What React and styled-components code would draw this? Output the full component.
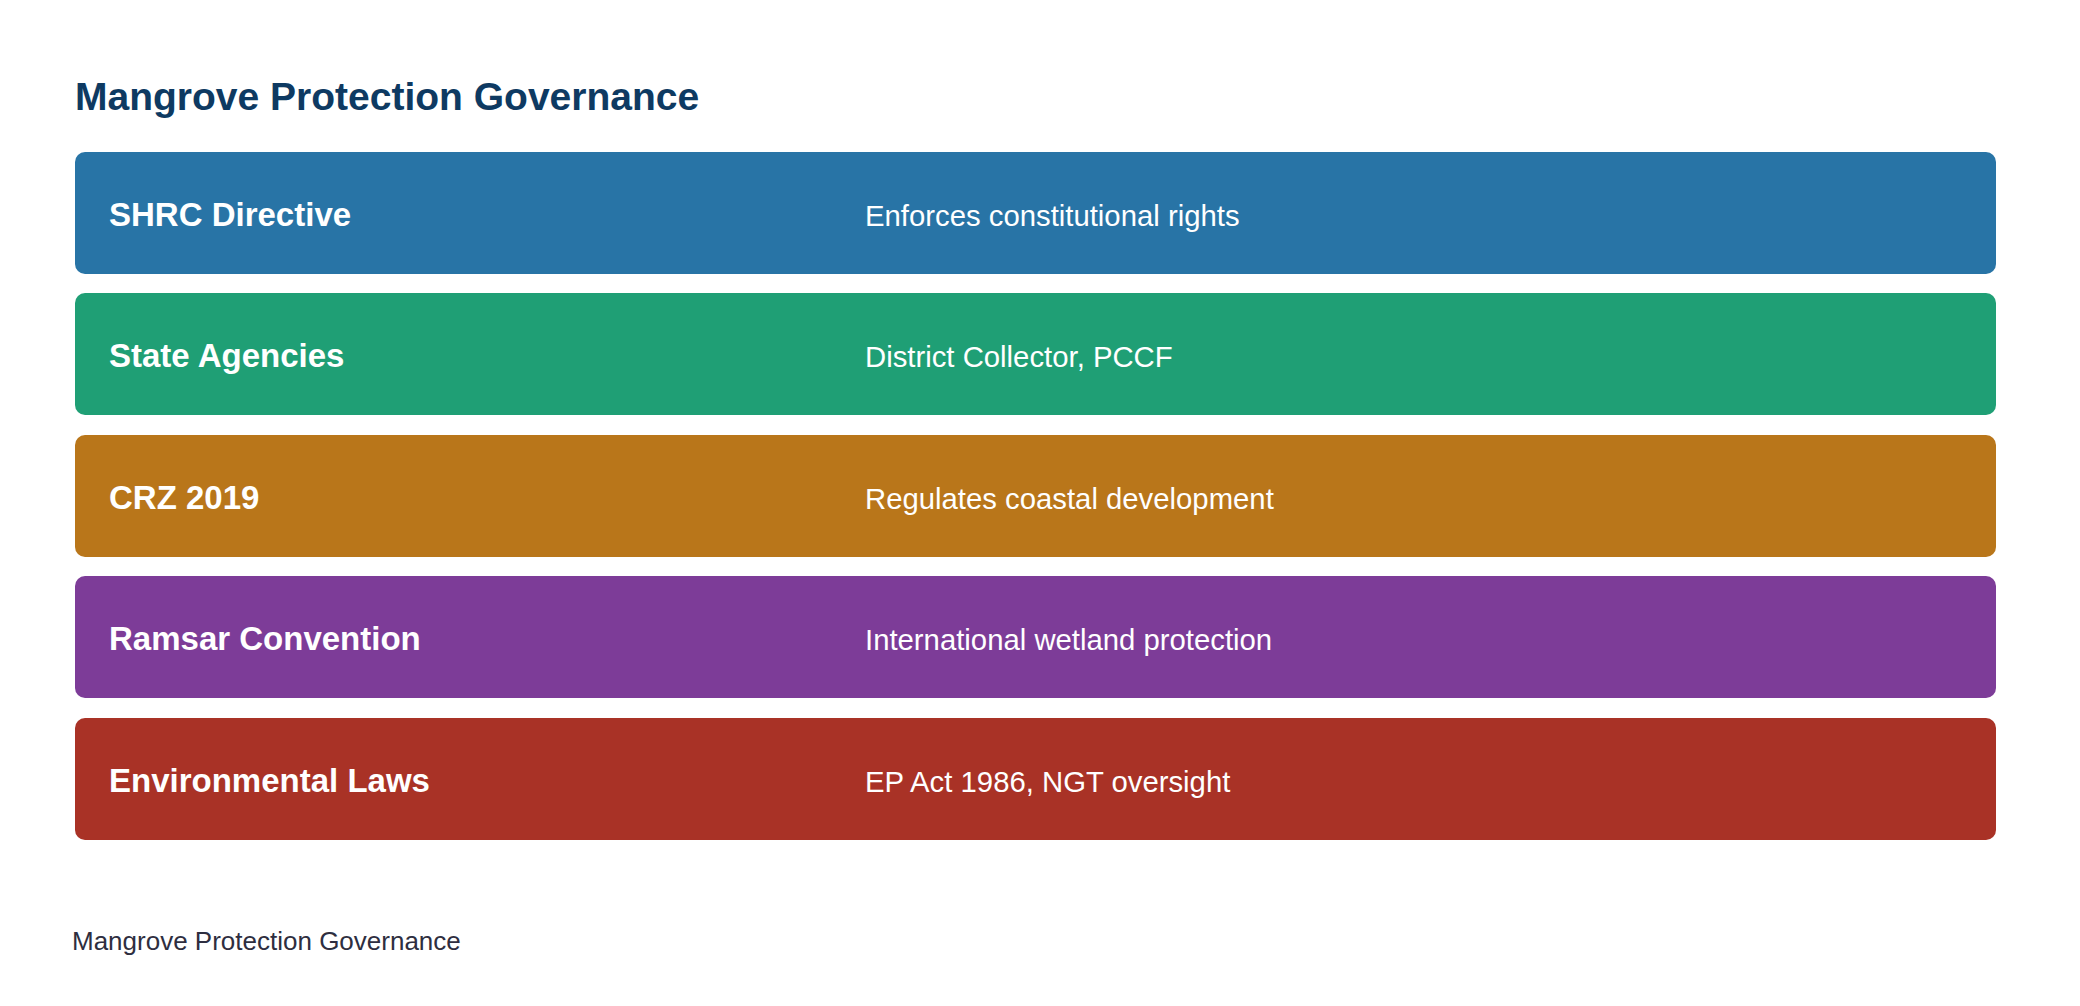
import React from "react";
import styled, { createGlobalStyle } from "styled-components";

const GlobalStyle = createGlobalStyle`
  html, body {
    margin: 0;
    padding: 0;
    background: #fff;
    font-family: "Liberation Sans", Arial, sans-serif;
  }
`;

const Page = styled.div`
  width: 2080px;
  min-height: 1006px;
  box-sizing: border-box;
  background: #fff;
`;

const Content = styled.section`
  padding: 74.5px 84px 0 75px;
`;

const Title = styled.h1`
  margin: 0 0 33px;
  font-size: 39px;
  font-weight: 700;
  line-height: normal;
  color: #0e3a62;
`;

const List = styled.div`
  display: flex;
  flex-direction: column;
  gap: 19.5px;
`;

const Row = styled.div`
  display: flex;
  align-items: center;
  height: 122px;
  padding: 0 34px;
  border-radius: 10px;
  background: ${({ color }) => color};
  color: #fff;
`;

const Label = styled.div`
  flex: 0 0 756px;
  font-size: 33px;
  font-weight: 700;
  padding-top: 4px;
`;

const Description = styled.div`
  flex: 1;
  font-size: 29.3px;
  padding-top: 6px;
`;

const Caption = styled.p`
  margin: 86px 0 0;
  padding-left: 72px;
  font-size: 26px;
  line-height: normal;
  color: #2e2e40;
`;

const items = [
  { label: "SHRC Directive", text: "Enforces constitutional rights", color: "#2874a6" },
  { label: "State Agencies", text: "District Collector, PCCF", color: "#1f9f75" },
  { label: "CRZ 2019", text: "Regulates coastal development", color: "#b9761a" },
  { label: "Ramsar Convention", text: "International wetland protection", color: "#7d3c98" },
  { label: "Environmental Laws", text: "EP Act 1986, NGT oversight", color: "#a93226" },
];

export default function App() {
  return (
    <Page>
      <GlobalStyle />
      <Content>
        <Title>Mangrove Protection Governance</Title>
        <List>
          {items.map((item) => (
            <Row key={item.label} color={item.color}>
              <Label>{item.label}</Label>
              <Description>{item.text}</Description>
            </Row>
          ))}
        </List>
      </Content>
      <Caption>Mangrove Protection Governance</Caption>
    </Page>
  );
}
